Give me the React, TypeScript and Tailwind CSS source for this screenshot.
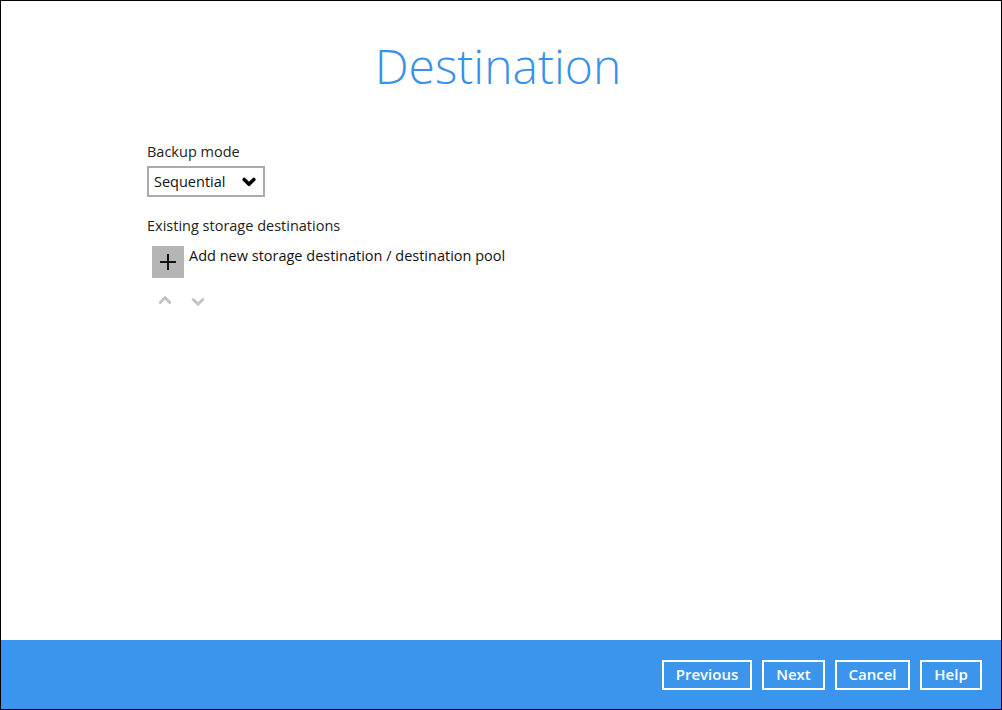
import React from 'react';

const ChevronDown = ({ className, width = 3 }: { className?: string; width?: number }) => (
  <svg viewBox="0 0 14 10" className={className} fill="none" stroke="currentColor" strokeWidth={width} strokeLinecap="round" strokeLinejoin="round">
    <path d="M2.2 2.5 L7 7.3 L11.8 2.5" />
  </svg>
);

const ChevronUp = ({ className }: { className?: string }) => (
  <svg viewBox="0 0 14 10" className={className} fill="none" stroke="currentColor" strokeWidth={3} strokeLinecap="round" strokeLinejoin="round">
    <path d="M2.2 7.5 L7 2.7 L11.8 7.5" />
  </svg>
);

const FooterButton = ({ label, width }: { label: string; width: string }) => (
  <button className={`${width} h-[30px] border-2 border-white text-white text-[15px] font-semibold flex items-center justify-center`}>
    {label}
  </button>
);

export default function App() {
  return (
    <div
      className="w-[1002px] h-[710px] border border-black bg-white flex flex-col"
      style={{ fontFamily: '"Open Sans", "Noto Sans", sans-serif' }}
    >
      <div className="flex-1 flex flex-col">
        <h1 className="text-center text-[48px] font-light leading-[60px] text-[#3a92e8] pt-[35px] pr-[6px]">
          Destination
        </h1>

        <div className="pl-[146px] pt-[46px] text-[14.5px] text-[#222]">
          <div className="leading-[20px]">Backup mode</div>
          <div className="mt-[4px] w-[118px] h-[31px] border-2 border-[#ababab] flex items-center justify-between pl-[5px] pr-[7px]">
            <span className="text-[14.5px] text-[#111]">Sequential</span>
            <ChevronDown className="w-[14px] h-[10px] text-black mt-[1px]" width={3.6} />
          </div>

          <div className="mt-[19px] leading-[20px]">Existing storage destinations</div>

          <div className="mt-[10px] ml-[5px] flex items-start gap-[5px]">
            <div className="w-[32px] h-[32px] bg-[#b5b5b5] flex items-center justify-center">
              <svg viewBox="0 0 20 20" className="w-[20px] h-[20px]" stroke="#111" strokeWidth={2}>
                <path d="M10 2 V18 M2 10 H18" />
              </svg>
            </div>
            <span className="leading-[20px] text-[#111]">Add new storage destination / destination pool</span>
          </div>

          <div className="mt-[15px] ml-[11px] flex items-center gap-[19px] text-[#c4c4c4]">
            <ChevronUp className="w-[14px] h-[10px]" />
            <ChevronDown className="w-[14px] h-[10px] mt-[4px]" />
          </div>
        </div>
      </div>

      <div className="h-[69px] bg-[#3b95ec] flex items-center justify-end gap-[10px] pr-[19px]">
        <FooterButton label="Previous" width="w-[90px]" />
        <FooterButton label="Next" width="w-[63px]" />
        <FooterButton label="Cancel" width="w-[75px]" />
        <FooterButton label="Help" width="w-[62px]" />
      </div>
    </div>
  );
}
